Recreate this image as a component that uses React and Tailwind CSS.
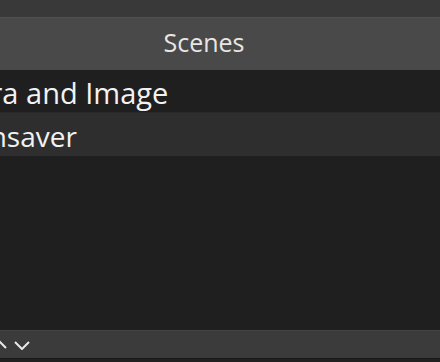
export default function App() {
  return (
    <div className="w-[440px] h-[362px] overflow-hidden bg-[#201f20] flex flex-col" style={{ fontFamily: '"Open Sans", "Noto Sans", sans-serif' }}>
      <div className="h-[17px] bg-[#3a393a] shrink-0" />
      <div className="h-[53px] shrink-0 bg-[#4a494a] border-t border-[#525152] flex items-center justify-center">
        <span className="text-[25px] leading-none text-[#e6e6e6] ml-[-32px] mt-[-3px]">Scenes</span>
      </div>
      <div className="flex-1 overflow-hidden flex flex-col">
        <div className="h-[43px] shrink-0 bg-[#201f20] border-b border-[#2a292a] flex items-center">
          <span className="text-[29px] leading-none text-[#f2f2f2] whitespace-nowrap ml-[-87px] mt-[2px]">Camera and Image</span>
        </div>
        <div className="h-[43px] shrink-0 bg-[#2f2e2f] flex items-center">
          <span className="text-[28px] leading-none text-[#f2f2f2] whitespace-nowrap ml-[-82px] mt-[2px]">Screensaver</span>
        </div>
        <div className="flex-1" />
      </div>
      <div className="h-[28px] shrink-0 bg-[#3c3b3c] border-t border-[#454445] flex items-center">
        <svg width="14" height="10" viewBox="0 0 14 10" className="ml-[-7px]">
          <polyline points="1,8 7,2 13,8" fill="none" stroke="#e8e8e8" strokeWidth="2" />
        </svg>
        <svg width="16" height="10" viewBox="0 0 16 10" className="ml-[7px]">
          <polyline points="1,2 8,9 15,2" fill="none" stroke="#e8e8e8" strokeWidth="2" />
        </svg>
      </div>
      <div className="h-[4px] shrink-0 bg-[#222122] border-t border-[#181818]" />
    </div>
  );
}
